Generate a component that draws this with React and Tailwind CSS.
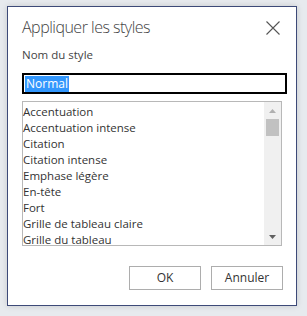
import { useState } from "react";

const styles = [
  "Accentuation",
  "Accentuation intense",
  "Citation",
  "Citation intense",
  "Emphase légère",
  "En-tête",
  "Fort",
  "Grille de tableau claire",
  "Grille du tableau",
];

function App() {
  const [name, setName] = useState("Normal");

  return (
    <div
      className="w-[307px] h-[316px] bg-[#e7eaee] pt-[6px] pl-[7px]"
      style={{ fontFamily: '"Open Sans", "Noto Sans", sans-serif' }}
    >
      <div className="w-[290px] h-[300px] border border-[#3d4a78] bg-white shadow-[0_0_6px_rgba(0,0,0,0.15)] flex flex-col pl-[14px] pr-[8px]">
        <div className="flex items-start justify-between pt-[8px] h-[38px]">
          <h1 className="text-[16px] leading-[24px] text-[#444] font-light tracking-[-0.5px]">
            Appliquer les styles
          </h1>
          <svg width="14" height="14" viewBox="0 0 14 14" className="mt-[6px] mr-[8px]">
            <path d="M0.5 0.5 L13.5 13.5 M13.5 0.5 L0.5 13.5" stroke="#555" strokeWidth="1.1" />
          </svg>
        </div>
        <div className="text-[11.5px] leading-[16px] text-[#444] mt-[2px]">Nom du style</div>
        <div className="mt-[10px] w-[265px] h-[21px] border-2 border-black flex items-center px-[1px]">
          <span className="bg-[#3297fd] text-white text-[12px] leading-[16px] px-[1px]">{name}</span>
        </div>
        <div className="mt-[7px] w-[260px] h-[145px] border border-[#b8b8b8] flex">
          <div className="flex-1 pt-[2px]">
            {styles.map((s) => (
              <div
                key={s}
                onClick={() => setName(s)}
                className="text-[11.5px] leading-[16px] text-[#333] whitespace-nowrap"
              >
                {s}
              </div>
            ))}
          </div>
          <div className="w-[17px] bg-[#f0f0f0] flex flex-col items-center">
            <div className="h-[17px] flex items-center justify-center">
              <svg width="7" height="4" viewBox="0 0 7 4">
                <path d="M3.5 0 L7 4 L0 4 Z" fill="#b0b0b0" />
              </svg>
            </div>
            <div className="w-[13px] h-[17px] bg-[#c1c1c1]" />
            <div className="flex-1" />
            <div className="h-[17px] flex items-center justify-center">
              <svg width="7" height="4" viewBox="0 0 7 4">
                <path d="M0 0 L7 0 L3.5 4 Z" fill="#606060" />
              </svg>
            </div>
          </div>
        </div>
        <div className="flex justify-end gap-[10px] mt-[20px] pr-[5px]">
          <button className="w-[72px] h-[24px] border border-[#adadad] bg-white text-[12px] text-[#333]">
            OK
          </button>
          <button className="w-[72px] h-[24px] border border-[#adadad] bg-white text-[12px] text-[#333]">
            Annuler
          </button>
        </div>
      </div>
    </div>
  );
}

export default App;
